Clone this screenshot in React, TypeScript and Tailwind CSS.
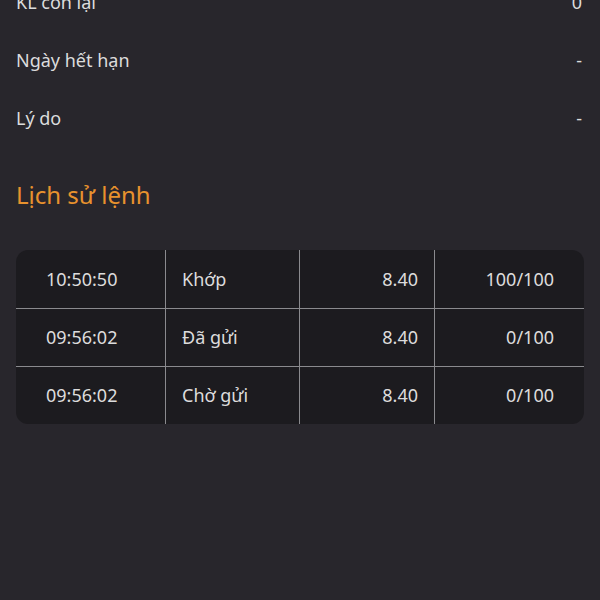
import React from 'react';

const info = [
  { label: 'KL còn lại', value: '0' },
  { label: 'Ngày hết hạn', value: '-' },
  { label: 'Lý do', value: '-' },
];

const history = [
  { time: '10:50:50', status: 'Khớp', price: '8.40', qty: '100/100' },
  { time: '09:56:02', status: 'Đã gửi', price: '8.40', qty: '0/100' },
  { time: '09:56:02', status: 'Chờ gửi', price: '8.40', qty: '0/100' },
];

export default function App() {
  return (
    <div
      className="h-[600px] w-[600px] overflow-hidden bg-[#28262c] text-[#dcdcdc]"
      style={{ fontFamily: '"Noto Sans", "Open Sans", sans-serif' }}
    >
      <div className="-mt-[27px]">
        {info.map(row => (
          <div key={row.label} className="flex h-[58px] items-center justify-between px-4 text-[18px]">
            <span>{row.label}</span>
            <span className="pr-[2px]">{row.value}</span>
          </div>
        ))}

        <h2 className="mt-8 px-4 text-[24px] leading-8 text-[#e8922e]">Lịch sử lệnh</h2>

        <div className="mx-4 mt-[39px] overflow-hidden rounded-xl bg-[#1c1b1f] text-[18px]">
          {history.map((row, i) => (
            <div
              key={i}
              className={`grid h-[58px] grid-cols-[149px_134px_135px_1fr] ${i > 0 ? 'border-t border-[#8a8a8e]' : ''}`}
            >
              <div className="flex items-center pl-[30px]">{row.time}</div>
              <div className="flex items-center border-l border-[#8a8a8e] pl-4">{row.status}</div>
              <div className="flex items-center justify-end border-l border-[#8a8a8e] pr-4">{row.price}</div>
              <div className="flex items-center justify-end border-l border-[#8a8a8e] pr-[30px]">{row.qty}</div>
            </div>
          ))}
        </div>
      </div>
    </div>
  );
}
